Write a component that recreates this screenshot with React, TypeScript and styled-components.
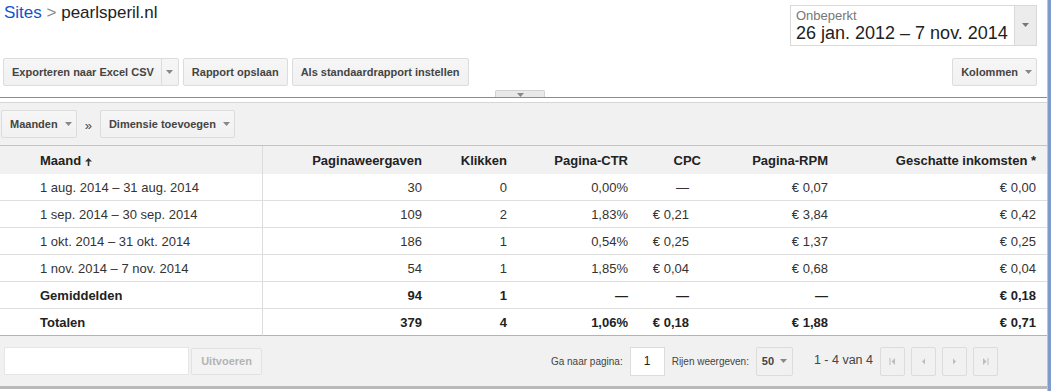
import React from 'react';
import styled, { createGlobalStyle } from 'styled-components';

const Global = createGlobalStyle`
  html, body { margin: 0; padding: 0; background: #fff; }
  body { font-family: "Liberation Sans", Arial, sans-serif; color: #222; }
  * { box-sizing: border-box; }
`;

const Frame = styled.div`
  display: flex;
  width: 1055px;
  height: 391px;
  overflow: hidden;
`;

const Main = styled.div`
  width: 1048px;
  flex: none;
  border-right: 1px solid #c4c4c4;
  display: flex;
  flex-direction: column;
`;

const Edge = styled.div`
  width: 3px;
  flex: none;
  background: #7d9ccd;
`;

const TopBar = styled.header`
  display: flex;
  justify-content: space-between;
  align-items: flex-start;
  height: 58px;
  padding: 5px 10px 0 4px;
`;

const Breadcrumb = styled.div`
  margin-top: -2px;
  font-size: 17px;
  line-height: 19px;
  color: #222;
`;

const Crumb = styled.a`
  color: #1155cc;
  text-decoration: none;
`;

const Sep = styled.span`
  color: #888;
`;

const DatePicker = styled.div`
  display: flex;
  width: 247px;
  height: 41px;
  border: 1px solid #d9d9d9;
  background: #fff;
`;

const DateText = styled.div`
  flex: 1;
  padding: 2px 5px 0 5px;
`;

const DateLabel = styled.div`
  font-size: 13px;
  line-height: 15px;
  color: #777;
`;

const DateValue = styled.div`
  font-size: 18px;
  line-height: 20px;
  color: #222;
  white-space: nowrap;
`;

const DateArrow = styled.div`
  width: 22px;
  flex: none;
  background: #ececec;
  border-left: 1px solid #d9d9d9;
  display: flex;
  justify-content: center;
  padding-top: 17px;
`;

const Toolbar = styled.div`
  display: flex;
  justify-content: space-between;
  height: 28px;
  padding: 0 10px 0 3px;
`;

const Group = styled.div`
  display: flex;
  gap: 4px;
`;

const Button = styled.button<{ $disabled?: boolean }>`
  display: inline-flex;
  align-items: center;
  gap: 7px;
  height: 28px;
  padding: 0 8px;
  border: 1px solid #dcdcdc;
  border-radius: 2px;
  background: linear-gradient(#f6f6f6, #f1f1f1);
  font-family: "Liberation Sans", Arial, sans-serif;
  font-size: 11px;
  font-weight: bold;
  color: ${p => (p.$disabled ? '#b3b3b3' : '#444')};
  white-space: nowrap;
  cursor: default;
`;

const MenuButton = styled(Button)`
  padding: 0 4px 0 8px;
`;

const Split = styled.div`
  display: flex;
  height: 28px;
  border: 1px solid #dcdcdc;
  border-radius: 2px;
  background: linear-gradient(#f6f6f6, #f1f1f1);
`;

const SplitMain = styled.span`
  display: flex;
  align-items: center;
  padding: 0 7px 0 8px;
  font-size: 11px;
  font-weight: bold;
  color: #444;
  white-space: nowrap;
`;

const SplitArrow = styled.span`
  width: 17px;
  display: flex;
  align-items: center;
  justify-content: center;
  border-left: 1px solid #dcdcdc;
`;

const CollapseRow = styled.div`
  height: 12px;
  border-bottom: 1px solid #6e8fc8;
  display: flex;
  align-items: flex-end;
  padding-left: 495px;
  margin-bottom: 4px;
`;

const CollapseTab = styled.div`
  width: 50px;
  height: 7px;
  background: #e9e9e9;
  border: 1px solid #d2d2d2;
  border-bottom: none;
  border-radius: 2px 2px 0 0;
  display: flex;
  justify-content: center;
  padding-top: 2px;
`;

const DimBar = styled.div`
  display: flex;
  align-items: center;
  gap: 8px;
  height: 44px;
  padding-left: 1px;
  background: #f1f1f1;
  border-top: 1px solid #d6d6d6;
  border-bottom: 1px solid #c4c4c4;
`;

const Chevrons = styled.span`
  font-size: 13px;
  color: #444;
  padding-top: 3px;
`;

const Table = styled.table`
  width: 1047px;
  table-layout: fixed;
  border-collapse: separate;
  border-spacing: 0;
  font-size: 13px;
`;

const Th = styled.th<{ $w: number; $first?: boolean; $last?: boolean }>`
  width: ${p => p.$w}px;
  height: 28px;
  padding: 0 ${p => (p.$last ? 11 : 0)}px 0 ${p => (p.$first ? 40 : 0)}px;
  background: #f1f1f1;
  font-weight: bold;
  color: #222;
  text-align: ${p => (p.$first ? 'left' : 'right')};
  white-space: nowrap;
  border-right: ${p => (p.$first ? '1px solid #dcdcdc' : 'none')};
`;

const Td = styled.td<{ $first?: boolean; $last?: boolean; $pad?: number; $bold?: boolean; $end?: boolean }>`
  height: 27px;
  padding: 0 ${p => (p.$last ? 11 : p.$pad || 0)}px 0 ${p => (p.$first ? 40 : 0)}px;
  color: ${p => (p.$bold ? '#222' : '#333')};
  font-weight: ${p => (p.$bold ? 'bold' : 'normal')};
  text-align: ${p => (p.$first ? 'left' : 'right')};
  white-space: nowrap;
  border-bottom: 1px solid ${p => (p.$end ? '#b3b3b3' : '#dedede')};
  border-right: ${p => (p.$first ? '1px solid #dcdcdc' : 'none')};
`;

const SortIcon = styled.svg`
  margin-left: 4px;
  vertical-align: -1px;
`;

const Footer = styled.div`
  display: flex;
  align-items: center;
  height: 53px;
  padding: 0 49px 0 4px;
  background: #f1f1f1;
  border-bottom: 3px solid #b9b9b9;
`;

const SearchInput = styled.div`
  width: 185px;
  height: 28px;
  background: #fff;
  border: 1px solid #e6e6e6;
`;

const RunButton = styled(Button)`
  margin-left: 2px;
  width: 71px;
  height: 27px;
  justify-content: center;
  border-color: #e2e2e2;
  background: #f3f3f3;
`;

const Pager = styled.div`
  margin-left: auto;
  display: flex;
  align-items: center;
  font-size: 10px;
  color: #444;
`;

const PageInput = styled.div`
  width: 35px;
  height: 29px;
  margin: 0 7px 0 7px;
  background: #fff;
  border: 1px solid #dcdcdc;
  display: flex;
  align-items: center;
  justify-content: center;
  font-size: 12px;
  color: #222;
`;

const RowsSelect = styled.div`
  width: 37px;
  height: 29px;
  margin: 0 21px 0 7px;
  border: 1px solid #dcdcdc;
  border-radius: 2px;
  background: #f1f1f1;
  display: flex;
  align-items: center;
  justify-content: center;
  gap: 6px;
  font-size: 11px;
  font-weight: bold;
  color: #444;
`;

const Count = styled.span`
  font-size: 12.5px;
  color: #444;
  margin-right: 7px;
  margin-top: -3px;
`;

const NavGroup = styled.div`
  display: flex;
  gap: 6px;
`;

const NavButton = styled.div`
  width: 25px;
  height: 29px;
  border: 1px solid #dcdcdc;
  border-radius: 2px;
  background: #f1f1f1;
  display: flex;
  align-items: center;
  justify-content: center;
`;

const Caret = ({ color = '#888' }: { color?: string }) => (
  <svg width="7" height="4" viewBox="0 0 7 4">
    <polygon points="0,0 7,0 3.5,4" fill={color} />
  </svg>
);

const NavIcon = ({ kind }: { kind: 'first' | 'prev' | 'next' | 'last' }) => {
  const c = '#bdbdbd';
  return (
    <svg width="7" height="7" viewBox="0 0 7 7">
      {kind === 'first' && (
        <>
          <rect x="0.5" y="0" width="1" height="7" fill={c} />
          <polygon points="6,0 6,7 2.5,3.5" fill={c} />
        </>
      )}
      {kind === 'prev' && <polygon points="5,0.5 5,6.5 2,3.5" fill={c} />}
      {kind === 'next' && <polygon points="2,0.5 2,6.5 5,3.5" fill={c} />}
      {kind === 'last' && (
        <>
          <polygon points="1,0 1,7 4.5,3.5" fill={c} />
          <rect x="5.5" y="0" width="1" height="7" fill={c} />
        </>
      )}
    </svg>
  );
};

const cols = [
  { label: 'Maand', w: 263 },
  { label: 'Paginaweergaven', w: 159 },
  { label: 'Klikken', w: 85 },
  { label: 'Pagina-CTR', w: 121 },
  { label: 'CPC', w: 73 },
  { label: 'Pagina-RPM', w: 127 },
  { label: 'Geschatte inkomsten *', w: 219 },
];

const rows = [
  ['1 aug. 2014 – 31 aug. 2014', '30', '0', '0,00%', '—', '€ 0,07', '€ 0,00'],
  ['1 sep. 2014 – 30 sep. 2014', '109', '2', '1,83%', '€ 0,21', '€ 3,84', '€ 0,42'],
  ['1 okt. 2014 – 31 okt. 2014', '186', '1', '0,54%', '€ 0,25', '€ 1,37', '€ 0,25'],
  ['1 nov. 2014 – 7 nov. 2014', '54', '1', '1,85%', '€ 0,04', '€ 0,68', '€ 0,04'],
];

const summary = [
  ['Gemiddelden', '94', '1', '—', '—', '—', '€ 0,18'],
  ['Totalen', '379', '4', '1,06%', '€ 0,18', '€ 1,88', '€ 0,71'],
];

export default function App() {
  const renderRow = (r: string[], bold: boolean, end: boolean, key: number) => (
    <tr key={key}>
      {r.map((v, i) => (
        <Td
          key={i}
          $first={i === 0}
          $last={i === 6}
          $pad={i === 4 ? 12 : 0}
          $bold={bold}
          $end={end}
        >
          {v}
        </Td>
      ))}
    </tr>
  );

  return (
    <>
      <Global />
      <Frame>
        <Main>
          <TopBar>
            <Breadcrumb>
              <Crumb href="#">Sites</Crumb> <Sep>&gt;</Sep> pearlsperil.nl
            </Breadcrumb>
            <DatePicker>
              <DateText>
                <DateLabel>Onbeperkt</DateLabel>
                <DateValue>26 jan. 2012 – 7 nov. 2014</DateValue>
              </DateText>
              <DateArrow>
                <Caret color="#777" />
              </DateArrow>
            </DatePicker>
          </TopBar>

          <Toolbar>
            <Group>
              <Split>
                <SplitMain>Exporteren naar Excel CSV</SplitMain>
                <SplitArrow>
                  <Caret />
                </SplitArrow>
              </Split>
              <Button>Rapport opslaan</Button>
              <Button>Als standaardrapport instellen</Button>
            </Group>
            <MenuButton>
              Kolommen
              <Caret />
            </MenuButton>
          </Toolbar>

          <CollapseRow>
            <CollapseTab>
              <Caret />
            </CollapseTab>
          </CollapseRow>

          <DimBar>
            <MenuButton>
              Maanden
              <Caret />
            </MenuButton>
            <Chevrons>»</Chevrons>
            <MenuButton>
              Dimensie toevoegen
              <Caret />
            </MenuButton>
          </DimBar>

          <Table>
            <thead>
              <tr>
                {cols.map((c, i) => (
                  <Th key={i} $w={c.w} $first={i === 0} $last={i === 6}>
                    {c.label}
                    {i === 0 && (
                      <SortIcon width="7" height="8" viewBox="0 0 7 8">
                        <polygon points="3.5,0 7,3.5 4.3,3.5 4.3,8 2.7,8 2.7,3.5 0,3.5" fill="#333" />
                      </SortIcon>
                    )}
                  </Th>
                ))}
              </tr>
            </thead>
            <tbody>
              {rows.map((r, i) => renderRow(r, false, false, i))}
              {summary.map((r, i) => renderRow(r, true, i === 1, 10 + i))}
            </tbody>
          </Table>

          <Footer>
            <SearchInput />
            <RunButton $disabled>Uitvoeren</RunButton>
            <Pager>
              Ga naar pagina:
              <PageInput>1</PageInput>
              Rijen weergeven:
              <RowsSelect>
                50
                <Caret />
              </RowsSelect>
              <Count>1 - 4 van 4</Count>
              <NavGroup>
                <NavButton><NavIcon kind="first" /></NavButton>
                <NavButton><NavIcon kind="prev" /></NavButton>
                <NavButton><NavIcon kind="next" /></NavButton>
                <NavButton><NavIcon kind="last" /></NavButton>
              </NavGroup>
            </Pager>
          </Footer>
        </Main>
        <Edge />
      </Frame>
    </>
  );
}
